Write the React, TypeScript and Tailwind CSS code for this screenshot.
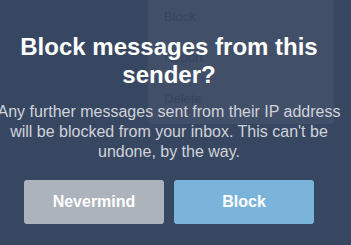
import React from 'react'

const menuItems = ['Block', 'Report', 'Delete']

export default function App() {
  return (
    <div className="relative h-[245px] w-[351px] overflow-hidden bg-[#384761] font-['Liberation_Sans',Arial,sans-serif]">
      {/* dropdown left open under the overlay */}
      <div className="absolute left-[148px] top-0 h-[124px] w-[186px] rounded-b bg-[#414f69] pt-[6px]">
        {menuItems.map((item) => (
          <div key={item} className="h-[41px] pl-4 text-[13px] leading-[22px] text-[#37455f]">
            {item}
          </div>
        ))}
      </div>

      <div className="relative flex w-[338px] flex-col items-center pt-[33px]">
        <h1 className="text-center text-[24px] font-bold leading-[28px] text-white">
          Block messages from this sender?
        </h1>
        <p className="mt-[13px] w-[344px] shrink-0 text-center text-[16px] leading-5 text-[#cfd3da]">
          Any further messages sent from their IP address will be blocked from your inbox. This can't be
          undone, by the way.
        </p>
        <div className="mt-[18px] flex gap-[10px]">
          <button className="h-[44px] w-[140px] rounded-[3px] bg-[#adb3bc] text-[16px] font-bold text-white">
            Nevermind
          </button>
          <button className="h-[44px] w-[140px] rounded-[3px] bg-[#7bb4da] text-[16px] font-bold text-white">
            Block
          </button>
        </div>
      </div>
    </div>
  )
}
